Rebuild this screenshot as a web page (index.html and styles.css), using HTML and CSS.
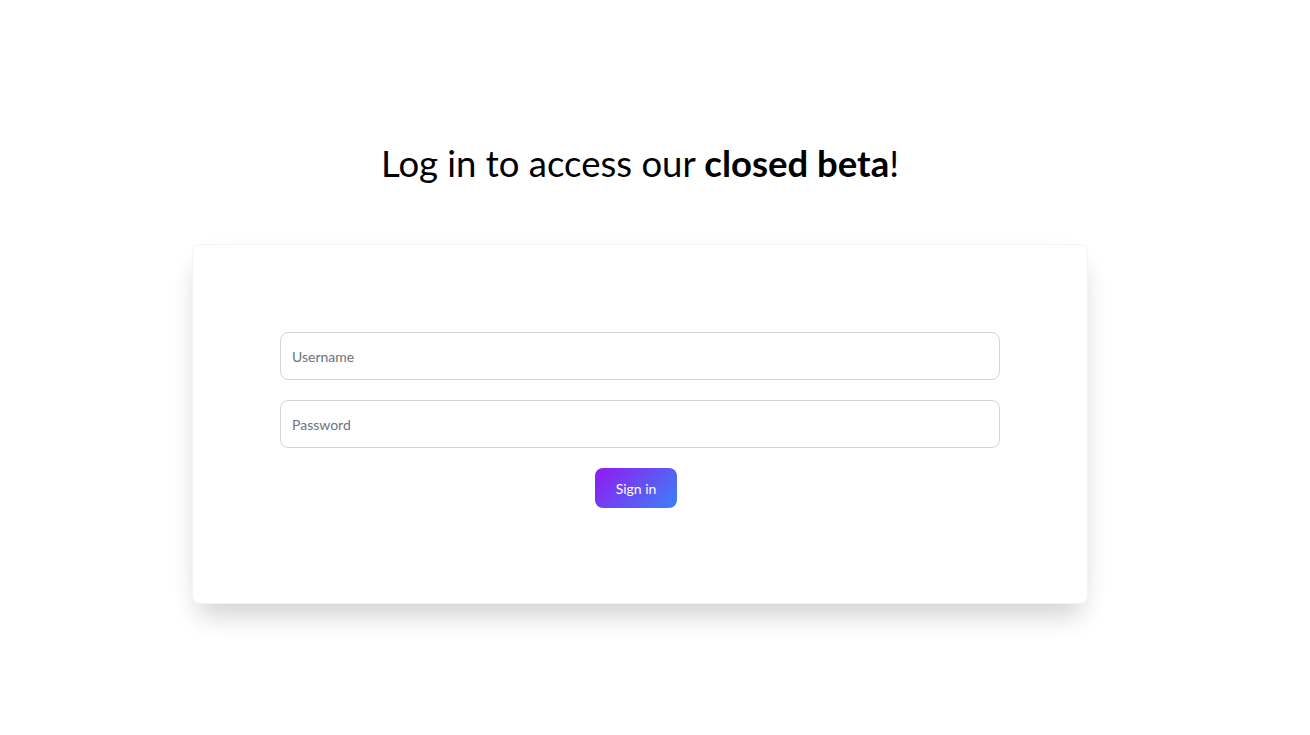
FILE: index.html
```html
<!DOCTYPE html>
<html>
<head>
<meta charset="utf-8">
<link rel="stylesheet" href="styles.css">
</head>
<body>
<main class="page">
  <h1 class="title">Log in to access our <strong>closed beta</strong>!</h1>
  <section class="card">
    <form class="form">
      <input class="field" type="text" placeholder="Username">
      <input class="field" type="password" placeholder="Password">
      <button class="btn" type="button">Sign in</button>
    </form>
  </section>
</main>
</body>
</html>
```
FILE: styles.css
```css
html, body {
  margin: 0;
  padding: 0;
  background: #ffffff;
  font-family: "Lato", "Noto Sans", sans-serif;
}
.page {
  width: 1280px;
  min-height: 100vh;
  box-sizing: border-box;
  display: flex;
  flex-direction: column;
  align-items: center;
  padding-top: 141px;
}
.title {
  margin: 0;
  font-size: 36.5px;
  line-height: 44px;
  font-weight: 400;
  color: #000;
}
.title strong { font-weight: 700; }
.card {
  margin-top: 59px;
  width: 896px;
  box-sizing: border-box;
  height: 360px;
  padding: 87px 87px 95px;
  background: #fff;
  border: 1px solid #f3f4f6;
  border-radius: 8px;
  box-shadow: 0 20px 25px -5px rgba(0,0,0,0.1), 0 10px 30px -10px rgba(0,0,0,0.12);
}
.form {
  display: flex;
  flex-direction: column;
  align-items: center;
  gap: 20px;
}
.field {
  width: 100%;
  height: 48px;
  box-sizing: border-box;
  padding: 0 11px;
  border: 1px solid #d1d5db;
  border-radius: 8px;
  font-family: inherit;
  font-size: 14px;
  color: #111827;
  outline: none;
}
.field::placeholder { color: #6b7280; }
.btn {
  width: 82px;
  height: 40px;
  margin-right: 8px;
  border: 0;
  border-radius: 8px;
  background: linear-gradient(135deg, #9319f0 0%, #3b82f6 100%);
  color: #fff;
  font-family: inherit;
  font-size: 14px;
}
```
